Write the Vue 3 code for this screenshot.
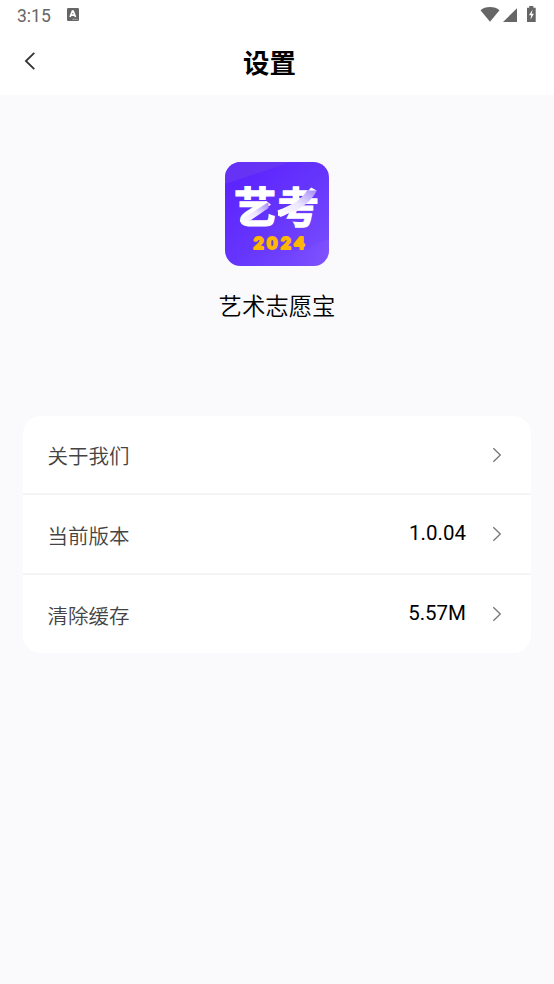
<script setup>
const rows = [
  { label: '关于我们', value: '' },
  { label: '当前版本', value: '1.0.04' },
  { label: '清除缓存', value: '5.57M' },
]
</script>

<template>
  <div class="screen">
    <div class="status">
      <span class="time">3:15</span>
      <svg class="ime" width="12" height="13" viewBox="0 0 12 13">
        <rect width="12" height="13" rx="1.2" fill="#666" />
        <path d="M3.1 9 5.4 3h.8L8.500 9M4 7.200h3.600" fill="none" stroke="#fff" stroke-width="1.700" />
        <path d="M5.500 11.300h1.300M7.500 11.300h1.200M9.400 11.300h1" stroke="#ddd" stroke-width=".8" />
      </svg>
      <svg class="signals" width="56" height="17" viewBox="0 0 56 17">
        <path d="M.5 4.200C3 2 6.200 1 10 1s7 1 9.500 3.200L10 15.800z" fill="#666" />
        <path d="M37 2.300v13.700H23z" fill="#666" />
        <path d="M49.200 0h4.200v1.700h2.300V16H47V1.700h2.200z" fill="#666" />
        <path d="M52.600 3.500 49 9.200h2.200l-.8 4.500 3.500-6h-2.200z" fill="#fff" />
      </svg>
    </div>

    <header class="nav">
      <svg class="back" width="12" height="20" viewBox="0 0 12 20">
        <path d="M10.300 1.800 1.900 10l8.400 8.200" fill="none" stroke="#333" stroke-width="1.800" />
      </svg>
      <h1>设置</h1>
    </header>

    <main>
      <section class="brand">
        <svg class="logo" width="104" height="104" viewBox="0 0 104 104">
          <defs>
            <linearGradient id="bg" x1="0" y1="0" x2="1" y2="1">
              <stop offset="0" stop-color="#5a1fff" />
              <stop offset=".5" stop-color="#6534fc" />
              <stop offset="1" stop-color="#7b50ff" />
            </linearGradient>
            <linearGradient id="corner" x1="0" y1="0" x2="1" y2="0">
              <stop offset="0" stop-color="#6d3bf5" stop-opacity=".1" />
              <stop offset="1" stop-color="#8758ff" />
            </linearGradient>
            <linearGradient id="fold" x1="0" y1="1" x2="1" y2="0">
              <stop offset="0" stop-color="#fff" />
              <stop offset=".5" stop-color="#ece6ff" />
              <stop offset="1" stop-color="#a387fb" />
            </linearGradient>
            <clipPath id="tile"><rect width="104" height="104" rx="15.500" /></clipPath>
          </defs>
          <g clip-path="url(#tile)">
            <rect width="104" height="104" fill="url(#bg)" />
            <path d="M0 22Q34 11 66 0H0z" fill="#6c3af0" opacity=".65" />
            <path d="M40 104Q76 87 104 77v27z" fill="url(#corner)" opacity=".45" />
            <g class="mark">
              <text x="9" y="61">艺</text>
              <text x="52" y="61">考</text>
            </g>
            <path d="M43.500 40v6L26 58l-11 2v-2z" fill="url(#fold)" />
            <path d="M82 28.500h10C84 43 70 51 53 54v-5.500C67 44 76 38 82 28.500z" fill="url(#fold)" />
            <text class="year" x="28.500" y="87" textLength="51" lengthAdjust="spacing">2024</text>
          </g>
        </svg>
        <p>艺术志愿宝</p>
      </section>

      <section class="card">
        <div v-for="row in rows" :key="row.label" class="row">
          <span class="label">{{ row.label }}</span>
          <span class="value">{{ row.value }}</span>
          <svg width="10" height="16" viewBox="0 0 10 16">
            <path d="m1.300 1.300 7 6.700-7 6.700" fill="none" stroke="#777" stroke-width="1.300" />
          </svg>
        </div>
      </section>
    </main>
  </div>
</template>

<style>
body {
  margin: 0;
  background: #fafafc;
}
</style>

<style scoped>
.screen {
  display: flex;
  flex-direction: column;
  height: 984px;
  background: #fafafc;
  font-family: Roboto, "Noto Sans CJK SC", sans-serif;
  color: #000;
}
.status {
  display: flex;
  align-items: flex-start;
  box-sizing: border-box;
  height: 32px;
  padding: 6px 18px 0 17px;
  background: #fff;
}
.time {
  width: 50px;
  font-size: 17.5px;
  line-height: 20px;
  color: #666;
}
.ime {
  margin-top: 2px;
}
.signals {
  margin-left: auto;
}
.nav {
  display: grid;
  grid-template-columns: 12px 1fr 12px;
  align-items: center;
  box-sizing: border-box;
  height: 63px;
  padding: 0 39px 2px 24px;
  background: #fff;
}
.back {
  margin-bottom: 3px;
}
h1 {
  margin: 3px 0 0;
  text-align: center;
  font-size: 26.4px;
  line-height: 36px;
  font-weight: 700;
}
.brand {
  display: flex;
  flex-direction: column;
  align-items: center;
  padding-top: 67px;
  height: 254px;
}
.brand p {
  margin: 24px 0 0;
  font-size: 23.4px;
  line-height: 34px;
  font-weight: 350;
}
.mark {
  font: 700 42px "Noto Sans CJK SC", sans-serif;
  fill: #fff;
  stroke: #fff;
  stroke-width: 1.4px;
}
.year {
  font: 900 17.5px Lato, "Open Sans", sans-serif;
  fill: #ffb703;
  stroke: #ffb703;
  stroke-width: 2px;
  stroke-linejoin: round;
}
.card {
  margin: 0 23px;
  border-radius: 18px;
  background: #fff;
}
.row {
  display: flex;
  align-items: center;
  box-sizing: border-box;
  height: 77px;
  padding: 0 29px 0 24.5px;
  font-size: 20.5px;
}
.row + .row {
  height: 80px;
  border-top: 2px solid #f4f4f5;
}
.label {
  color: #444;
  line-height: 30px;
  margin-top: 5px;
  font-weight: 350;
}
.value {
  margin-left: auto;
  margin-right: 26px;
  margin-top: -2px;
}
</style>
